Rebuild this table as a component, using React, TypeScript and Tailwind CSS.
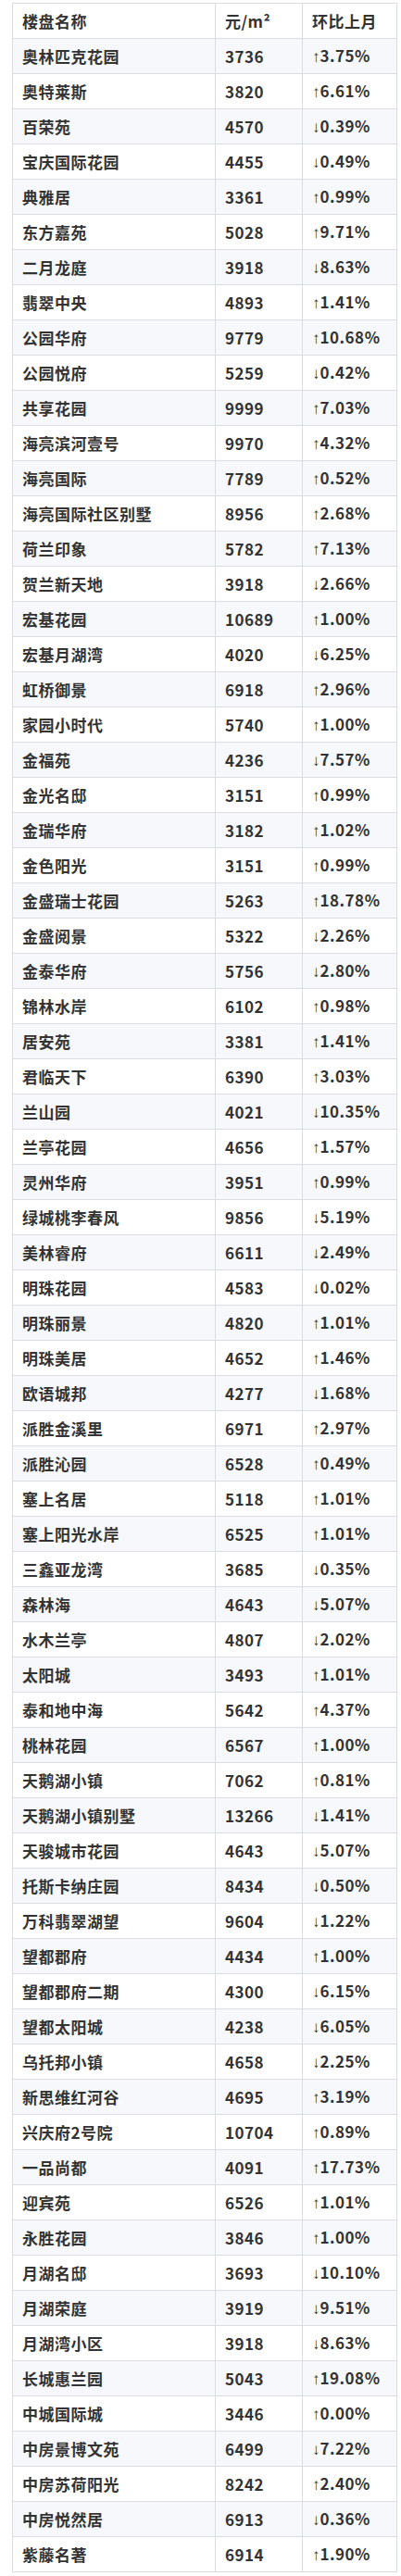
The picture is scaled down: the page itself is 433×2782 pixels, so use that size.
import React from 'react';

type Row = [string, string, string];

const rows: Row[] = [
  ['奥林匹克花园', '3736', '↑3.75%'],
  ['奥特莱斯', '3820', '↑6.61%'],
  ['百荣苑', '4570', '↓0.39%'],
  ['宝庆国际花园', '4455', '↓0.49%'],
  ['典雅居', '3361', '↑0.99%'],
  ['东方嘉苑', '5028', '↑9.71%'],
  ['二月龙庭', '3918', '↓8.63%'],
  ['翡翠中央', '4893', '↑1.41%'],
  ['公园华府', '9779', '↑10.68%'],
  ['公园悦府', '5259', '↓0.42%'],
  ['共享花园', '9999', '↑7.03%'],
  ['海亮滨河壹号', '9970', '↑4.32%'],
  ['海亮国际', '7789', '↑0.52%'],
  ['海亮国际社区别墅', '8956', '↑2.68%'],
  ['荷兰印象', '5782', '↑7.13%'],
  ['贺兰新天地', '3918', '↓2.66%'],
  ['宏基花园', '10689', '↑1.00%'],
  ['宏基月湖湾', '4020', '↓6.25%'],
  ['虹桥御景', '6918', '↑2.96%'],
  ['家园小时代', '5740', '↑1.00%'],
  ['金福苑', '4236', '↓7.57%'],
  ['金光名邸', '3151', '↑0.99%'],
  ['金瑞华府', '3182', '↑1.02%'],
  ['金色阳光', '3151', '↑0.99%'],
  ['金盛瑞士花园', '5263', '↑18.78%'],
  ['金盛阅景', '5322', '↓2.26%'],
  ['金泰华府', '5756', '↓2.80%'],
  ['锦林水岸', '6102', '↑0.98%'],
  ['居安苑', '3381', '↑1.41%'],
  ['君临天下', '6390', '↑3.03%'],
  ['兰山园', '4021', '↓10.35%'],
  ['兰亭花园', '4656', '↑1.57%'],
  ['灵州华府', '3951', '↑0.99%'],
  ['绿城桃李春风', '9856', '↓5.19%'],
  ['美林睿府', '6611', '↓2.49%'],
  ['明珠花园', '4583', '↓0.02%'],
  ['明珠丽景', '4820', '↑1.01%'],
  ['明珠美居', '4652', '↑1.46%'],
  ['欧语城邦', '4277', '↓1.68%'],
  ['派胜金溪里', '6971', '↑2.97%'],
  ['派胜沁园', '6528', '↑0.49%'],
  ['塞上名居', '5118', '↑1.01%'],
  ['塞上阳光水岸', '6525', '↑1.01%'],
  ['三鑫亚龙湾', '3685', '↓0.35%'],
  ['森林海', '4643', '↓5.07%'],
  ['水木兰亭', '4807', '↓2.02%'],
  ['太阳城', '3493', '↑1.01%'],
  ['泰和地中海', '5642', '↑4.37%'],
  ['桃林花园', '6567', '↑1.00%'],
  ['天鹅湖小镇', '7062', '↑0.81%'],
  ['天鹅湖小镇别墅', '13266', '↓1.41%'],
  ['天骏城市花园', '4643', '↓5.07%'],
  ['托斯卡纳庄园', '8434', '↓0.50%'],
  ['万科翡翠湖望', '9604', '↓1.22%'],
  ['望都郡府', '4434', '↑1.00%'],
  ['望都郡府二期', '4300', '↓6.15%'],
  ['望都太阳城', '4238', '↓6.05%'],
  ['乌托邦小镇', '4658', '↓2.25%'],
  ['新思维红河谷', '4695', '↑3.19%'],
  ['兴庆府2号院', '10704', '↑0.89%'],
  ['一品尚都', '4091', '↑17.73%'],
  ['迎宾苑', '6526', '↑1.01%'],
  ['永胜花园', '3846', '↑1.00%'],
  ['月湖名邸', '3693', '↓10.10%'],
  ['月湖荣庭', '3919', '↓9.51%'],
  ['月湖湾小区', '3918', '↓8.63%'],
  ['长城惠兰园', '5043', '↑19.08%'],
  ['中城国际城', '3446', '↑0.00%'],
  ['中房景博文苑', '6499', '↓7.22%'],
  ['中房苏荷阳光', '8242', '↑2.40%'],
  ['中房悦然居', '6913', '↓0.36%'],
  ['紫藤名著', '6914', '↑1.90%'],
];

const cell = 'h-[38px] border border-[#d9dce1] px-[10px] align-middle whitespace-nowrap';

// arrow glyph in a narrow latin font, the number in the CJK font
const Change: React.FC<{ value: string }> = ({ value }) => (
  <>
    <span className="font-['Liberation_Sans',sans-serif] font-normal tracking-normal">{value.slice(0, 1)}</span>
    {value.slice(1)}
  </>
);

export default function App() {
  return (
    <div className="bg-white pt-[3px] pb-[5px] pl-[13px]">
      <table className="w-[415px] table-fixed border-collapse font-['Noto_Sans_CJK_SC',sans-serif] text-[17px] font-bold leading-none tracking-[0.5px] text-[#333333]">
        <colgroup>
          <col className="w-[219px]" />
          <col className="w-[94px]" />
          <col className="w-[102px]" />
        </colgroup>
        <thead>
          <tr className="bg-white">
            <th className={`${cell} text-left`}>楼盘名称</th>
            <th className={`${cell} text-left`}>元/m²</th>
            <th className={`${cell} text-left`}>环比上月</th>
          </tr>
        </thead>
        <tbody>
          {rows.map(([name, price, change], i) => (
            <tr key={name} className={i % 2 === 0 ? 'bg-[#f6f8fb]' : 'bg-white'}>
              <td className={cell}>{name}</td>
              <td className={cell}>{price}</td>
              <td className={cell}>
                <Change value={change} />
              </td>
            </tr>
          ))}
        </tbody>
      </table>
    </div>
  );
}
